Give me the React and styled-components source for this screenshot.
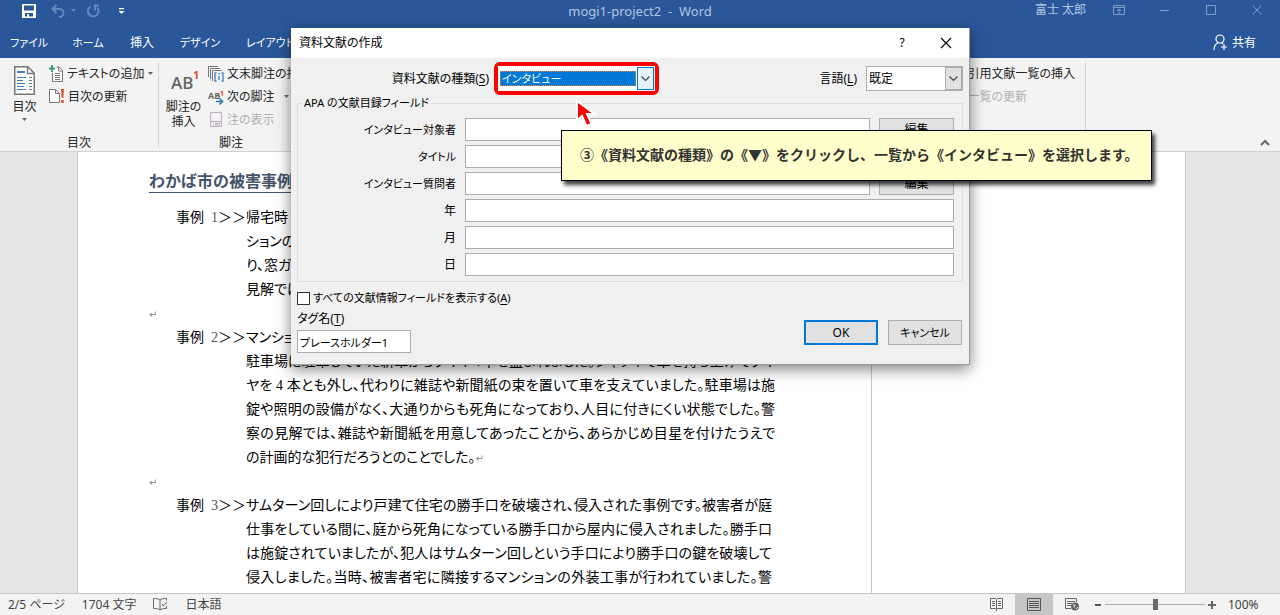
import React from "react";
import styled, { createGlobalStyle } from "styled-components";

const Global = createGlobalStyle`
  *, *::before, *::after { box-sizing: border-box; }
  body {
    margin: 0;
    overflow: hidden;
    background: #e6e6e6;
    color: #262626;
    font: 12px/16px "Noto Sans", "Noto Sans CJK JP", sans-serif;
    font-feature-settings: "palt";
  }
  button, input, select { font: inherit; font-feature-settings: inherit; color: inherit; margin: 0; }
  button { border: 0; padding: 0; background: none; cursor: pointer; }
  svg { display: block; flex: none; }
  u { text-underline-offset: 2px; }
`;

const Window = styled.div`
  height: 100vh;
  display: flex;
  flex-direction: column;
  position: relative;
`;

/* ---------- title bar and tabs ---------- */
const Header = styled.header`
  background: #2a579a;
  color: #fff;
  flex: none;
`;
const TitleBar = styled.div`
  height: 22px;
  display: grid;
  grid-template-columns: 1fr auto 1fr;
  align-items: center;
`;
const QuickAccess = styled.div`
  display: flex;
  align-items: center;
  padding-left: 22px;
`;
const QuickButton = styled.button`
  width: ${(p) => p.$w}px;
  height: 20px;
  color: ${(p) => (p.$dim ? "#6487c0" : "#fff")};
`;
const Title = styled.h1`
  margin: 0;
  font-size: 13px;
  font-weight: 400;
  color: #b4c6e2;
  white-space: pre;
`;
const WindowTools = styled.div`
  display: flex;
  align-items: center;
  justify-content: flex-end;
`;
const UserName = styled.span`
  color: #b4c6e2;
  margin: 0 10px 3px 0;
`;
const WindowButton = styled.button`
  width: 46px;
  height: 20px;
  display: flex;
  justify-content: center;
  color: #7f9bca;
`;
const TabBar = styled.nav`
  height: 36px;
  display: flex;
  align-items: center;
  padding-top: 5px;
`;
const Tab = styled.button`
  width: ${(p) => p.$w}px;
  height: 31px;
  font-size: ${(p) => (p.$kana ? 11 : 12)}px;
  text-align: center;
  white-space: nowrap;
`;
const Share = styled.button`
  margin-left: auto;
  padding-right: 24px;
  display: flex;
  align-items: center;
  gap: 4px;
`;

/* ---------- ribbon ---------- */
const Ribbon = styled.section`
  height: 94px;
  flex: none;
  display: flex;
  padding: 4px 0;
  background: #f3f3f3;
  border-bottom: 1px solid #d2d2d2;
`;
const Group = styled.div`
  width: ${(p) => p.$w}px;
  flex: none;
  border-right: ${(p) => (p.$line ? "1px solid #d2d2d2" : "0")};
  display: flex;
  flex-direction: column;
`;
const GroupBody = styled.div`
  height: 70px;
  flex: none;
  display: flex;
  justify-content: ${(p) => (p.$end ? "flex-end" : "flex-start")};
  padding-right: ${(p) => (p.$end ? 10 : 0)}px;
`;
const GroupName = styled.div`
  text-align: center;
  padding-top: 2px;
  line-height: 18px;
`;
const BigButton = styled.button`
  width: 49px;
  flex: none;
  display: flex;
  flex-direction: column;
  align-items: center;
  padding-top: 4px;
  line-height: 15px;
  gap: 4px;
`;
const Stack = styled.div`
  display: flex;
  flex-direction: column;
`;
const SmallButton = styled.button`
  height: 23px;
  display: flex;
  align-items: center;
  gap: 3px;
  white-space: nowrap;
  color: ${(p) => (p.$dim ? "#b0b0b0" : "inherit")};
`;
const CaretSlot = styled.span`
  width: 12px;
  display: flex;
  justify-content: flex-end;
`;
const CollapseButton = styled.button`
  margin: auto 10px 0 auto;
  color: #666;
`;

/* ---------- document ---------- */
const Workspace = styled.main`
  flex: 1;
  min-height: 0;
  overflow: hidden;
  display: flex;
  padding: 0 94px 0 77px;
`;
const Page = styled.article`
  width: 795px;
  flex: none;
  background: #fff;
  border: 1px solid #c6c6c6;
  border-width: 0 1px;
  padding: 20px 99px 0 71px;
  color: #000;
  font: 14px/24px "Liberation Serif", "Noto Sans CJK JP", serif;
  font-feature-settings: "palt";
`;
const MarkupArea = styled.aside`
  flex: 1;
  background: #fff;
  border-right: 1px solid #c6c6c6;
`;
const Heading = styled.h2`
  margin: 0 0 13px;
  font-size: 16px;
  line-height: 20px;
  font-weight: 700;
  font-feature-settings: normal;
  color: #44546a;
  border-bottom: 1px solid #44546a;
`;
const Case = styled.section`
  display: grid;
  grid-template-columns: 70px 1fr;
  padding-left: 27px;
`;
const CaseLabel = styled.div`
  white-space: pre;
  font-feature-settings: normal;
  span { color: #555; }
`;
const Line = styled.div`
  height: 24px;
  white-space: nowrap;
  text-align: justify;
  text-align-last: ${(p) => (p.$ragged ? "left" : "justify")};
`;
const Blank = styled.div`
  height: 24px;
`;
const Mark = styled.span`
  color: #888;
  font: 10px/24px "DejaVu Sans", sans-serif;
`;

/* ---------- status bar ---------- */
const StatusBar = styled.footer`
  height: 22px;
  flex: none;
  display: flex;
  align-items: center;
  padding: 0 18px 0 8px;
  background: #f3f3f3;
  border-top: 1px solid #c6c6c6;
  color: #444;
`;
const StatusItem = styled.span`
  margin-right: 17px;
`;
const ViewButtons = styled.div`
  margin-left: auto;
  display: flex;
  height: 100%;
`;
const ViewButton = styled.button`
  width: 38px;
  display: flex;
  align-items: center;
  justify-content: center;
  background: ${(p) => (p.$on ? "#c6c6c6" : "transparent")};
`;
const ZoomButton = styled.button`
  width: 14px;
  height: 20px;
  display: flex;
  align-items: center;
  justify-content: center;
`;
const ZoomSlider = styled.input`
  appearance: none;
  width: 100px;
  height: 14px;
  background: linear-gradient(#ababab, #ababab) center / 100% 1px no-repeat;
  &::-webkit-slider-thumb {
    appearance: none;
    width: 5px;
    height: 11px;
    background: #6a6a6a;
  }
`;
const ZoomValue = styled.span`
  width: 34px;
  margin-left: 9px;
`;

/* ---------- dialog ---------- */
const Dialog = styled.form`
  position: absolute;
  left: 291px;
  top: 28px;
  width: 679px;
  background: #f0f0f0;
  border: 1px solid #9a9a9a;
  border-width: 0 1px 1px 0;
  box-shadow: 0 4px 14px rgba(0, 0, 0, 0.5);
  color: #000;
  padding-bottom: 11px;
`;
const DialogTitle = styled.div`
  height: 30px;
  background: #fff;
  display: flex;
  align-items: center;
  padding: 0 16px 0 8px;
`;
const DialogName = styled.h2`
  margin: 0 auto 0 0;
  font-size: 12px;
  font-weight: 400;
`;
const DialogIcon = styled.button`
  width: 14px;
  height: 20px;
  margin-left: 30px;
  display: flex;
  align-items: center;
  justify-content: center;
`;
const TypeRow = styled.div`
  height: 40px;
  display: flex;
  align-items: center;
  padding: 1px 6px 0 0;
`;
const TypeLabel = styled.label`
  width: ${(p) => p.$w || "auto"};
  margin-left: ${(p) => (p.$push ? "auto" : "0")};
  margin-right: ${(p) => (p.$push ? "9px" : "5px")};
  text-align: right;
`;
const Ring = styled.div`
  border: 4px solid #f00;
  border-radius: 6px;
  display: flex;
`;
const Combo = styled.div`
  width: ${(p) => p.$w}px;
  height: 25px;
  display: flex;
  background: #fff;
  border: 1px solid ${(p) => (p.$hot ? "#fff" : "#adadad")};
`;
const ComboSelect = styled.select`
  appearance: none;
  flex: 1;
  border: 0;
  outline: ${(p) => (p.$hot ? "1px dotted #e08a32" : "0")};
  outline-offset: -1px;
  border-radius: 0;
  padding: 0 2px;
  margin: ${(p) => (p.$hot ? "4px 1px" : "0")};
  background: ${(p) => (p.$hot ? "#0078d7" : "#fff")};
  color: ${(p) => (p.$hot ? "#fff" : "#000")};
  font-size: ${(p) => (p.$hot ? 11 : 12)}px;
  line-height: 14px;
`;
const ComboArrow = styled.span`
  width: 17px;
  display: flex;
  align-items: center;
  justify-content: center;
  pointer-events: none;
  border: 1px solid ${(p) => (p.$hot ? "#0078d7" : "#adadad")};
  background: ${(p) => (p.$hot ? "#e5f1fb" : "#e1e1e1")};
`;
const Fields = styled.fieldset`
  margin: 0 6px;
  padding: 10px 8px 5px 0;
  border: 1px solid #dcdcdc;
  display: flex;
  flex-direction: column;
  gap: 4px;
`;
const Legend = styled.legend`
  margin-left: 4px;
  padding: 0 2px;
  font-size: 11px;
  line-height: 10px;
`;
const Field = styled.div`
  display: flex;
  align-items: center;
  height: 23px;
`;
const FieldLabel = styled.label`
  width: 158px;
  margin-right: 9px;
  text-align: right;
  font-size: ${(p) => (p.$kana ? 11 : 12)}px;
`;
const TextBox = styled.input`
  flex: ${(p) => (p.$w ? "none" : "1")};
  width: ${(p) => (p.$w ? p.$w + "px" : "auto")};
  min-width: 0;
  height: 23px;
  border: 1px solid #abadb3;
  background: #fff;
  padding: 0 2px;
  font-size: 11px;
`;
const PushButton = styled.button`
  width: ${(p) => (p.$small ? 75 : 74)}px;
  height: ${(p) => (p.$small ? 23 : 25)}px;
  margin-left: ${(p) => (p.$small ? 9 : 10)}px;
  font-size: ${(p) => (p.$kana ? 11 : 12)}px;
  background: #e1e1e1;
  border: ${(p) => (p.$default ? "2px solid #0078d7" : "1px solid #adadad")};
`;
const CheckRow = styled.label`
  display: flex;
  align-items: center;
  gap: 3px;
  margin: 8px 0 0 6px;
  font-size: 11px;
`;
const CheckBox = styled.input`
  appearance: none;
  width: 13px;
  height: 13px;
  border: 1px solid #333;
  background: #fff;
`;
const DialogFoot = styled.div`
  display: flex;
  align-items: flex-start;
  padding: 5px 7px 0 6px;
`;
const TagField = styled.div`
  display: flex;
  flex-direction: column;
  gap: 3px;
  margin-right: auto;
`;
const Actions = styled.div`
  display: flex;
  margin: 9px 0 1px;
`;

/* ---------- guide bubble and pointer ---------- */
const Bubble = styled.p`
  position: absolute;
  left: 561px;
  top: 130px;
  width: 591px;
  margin: 0;
  padding: 13px 18px 15px;
  border: 1px solid #000;
  background: #ffffcb;
  box-shadow: 3px 4px 4px rgba(0, 0, 0, 0.75);
  color: #333;
  font: 700 14px/21px "Noto Sans CJK JP", sans-serif;
  white-space: nowrap;
`;
const Pointer = styled.svg`
  position: absolute;
  left: 574px;
  top: 98px;
`;

const Caret = ({ c = "#666" }) => (
  <svg width="7" height="4" viewBox="0 0 7 4"><path d="M1 0h5L3.500 3z" fill={c} /></svg>
);
const Chevron = ({ c = "#444" }) => (
  <svg width="9" height="6" viewBox="0 0 9 6"><path d="M.5.5l4 4 4-4" fill="none" stroke={c} strokeWidth="1.200" /></svg>
);
const SaveIcon = () => (
  <svg width="14" height="14" viewBox="0 0 14 14">
    <path fillRule="evenodd" fill="#fff" d="M0 0h14v14H0zM2 1.500v5h10v-5zM3 9v3.500h2V10h2v2.500h4V9z" />
  </svg>
);
const UndoIcon = () => (
  <svg width="15" height="14" viewBox="0 0 15 14" fill="none" stroke="currentColor" strokeWidth="2">
    <path d="M5.500 1L1.500 5l4 4M2 5h6.500a4 4 0 0 1 0 8H8" />
  </svg>
);
const RedoIcon = () => (
  <svg width="14" height="14" viewBox="0 0 14 14" fill="none" stroke="currentColor" strokeWidth="2">
    <path d="M4.500 2.500A5.300 5.300 0 1 0 11.500 4M8 1.500h5M9 1v5.500" />
  </svg>
);
const TocIcon = () => (
  <svg width="21" height="29" viewBox="0 0 21 29">
    <path d="M.75.75h13l6.500 6.500v21H.75z" fill="#fff" stroke="#777" strokeWidth="1.500" />
    <path d="M13.500 1v6.500H20" fill="none" stroke="#777" strokeWidth="1.300" />
    <path d="M3 5h8v2H3z" fill="#3f7fc1" />
    <path d="M3 11.500h9M3 14.500h6M3 17.500h8M3 20.500h7M3 23.500h9" stroke="#3f7fc1" />
    <path d="M15 11.500h3M15 14.500h3M15 17.500h3M15 20.500h3M15 23.500h3" stroke="#777" />
  </svg>
);
const AddTextIcon = () => (
  <svg width="15" height="17" viewBox="0 0 15 17">
    <path d="M3.500 8v8.500h10V5.500L10 2H7.500" fill="#fff" stroke="#777" />
    <path d="M9.500 2v4H13.500" fill="none" stroke="#777" />
    <path d="M6 8.500h5M6 10.500h5M6 12.500h5M6 14.500h5" stroke="#777" />
    <path d="M3 0v7M0 3.500h6" stroke="#4a9a7c" strokeWidth="2" />
  </svg>
);
const UpdateIcon = () => (
  <svg width="16" height="15" viewBox="0 0 16 15">
    <path d="M.5.5h6l4 4v9H.5zM6.500.5v4h4" fill="#fff" stroke="#777" />
    <path d="M12 0h3l-.7 9h-1.600zM12.200 11h2.500v3h-2.500z" fill="#d9502e" />
  </svg>
);
const FootnoteIcon = () => (
  <svg width="30" height="29" viewBox="0 0 30 29">
    <text x="2" y="23" fontSize="17" fontWeight="600" fontFamily="Open Sans" fill="#666">AB</text>
    <text x="24" y="13" fontSize="11" fontWeight="700" fontFamily="Open Sans" fill="#d9502e">1</text>
  </svg>
);
const EndnoteIcon = () => (
  <svg width="16" height="16" viewBox="0 0 16 16" fill="none">
    <path d="M.5 11V.5H10M2.500 13V2.500H12M4.500 15V4.500h9" stroke="#777" />
    <path d="M8.500 7H7v8h1.500M13.500 7H15v8h-1.500M11 7v1.500M11 10v4" stroke="#3f7fc1" strokeWidth="1.300" />
  </svg>
);
const NextNoteIcon = () => (
  <svg width="16" height="18" viewBox="0 0 16 18">
    <text x="0" y="11" fontSize="9" fontWeight="700" fontFamily="Open Sans" fill="#666">AB</text>
    <text x="12" y="8" fontSize="7" fontWeight="700" fontFamily="Open Sans" fill="#d9502e">1</text>
    <path d="M8 13.500h6M11.500 10.500l3 3-3 3" fill="none" stroke="#2e75b6" strokeWidth="1.600" />
  </svg>
);
const ShowNoteIcon = () => (
  <svg width="16" height="16" viewBox="0 0 16 16">
    <path d="M2.500.5h11v14h-11z" fill="#f6eef6" stroke="#b5b0b5" />
    <path d="M2 9.500h12M5 11.500h1M7 11.500h5M5 13h1M7 13h5" stroke="#b5b0b5" />
  </svg>
);
const ShareIcon = () => (
  <svg width="15" height="17" viewBox="0 0 15 17" fill="none" stroke="#fff" strokeWidth="1.200">
    <circle cx="7" cy="5" r="4" />
    <path d="M1 16c0-4 2-6.500 4.500-7.500M8.500 8.500L10 10M8 13h6M11 10v6" />
  </svg>
);
const CloseX = () => (
  <svg width="12" height="12" viewBox="0 0 12 12"><path d="M1 1l10 10M11 1L1 11" stroke="currentColor" fill="none" strokeWidth="1.100" /></svg>
);

const case1 = ["帰宅時", "ションの", "り、窓ガ", "見解では"];
const case2 = [
  "マンショ",
  "駐車場に駐車していた新車からタイヤ４本を盗まれました。ジャッキで車を持ち上げてタイ",
  "ヤを 4 本とも外し、代わりに雑誌や新聞紙の束を置いて車を支えていました。駐車場は施",
  "錠や照明の設備がなく、大通りからも死角になっており、人目に付きにくい状態でした。警",
  "察の見解では、雑誌や新聞紙を用意してあったことから、あらかじめ目星を付けたうえで",
  "の計画的な犯行だろうとのことでした。",
];
const case3 = [
  "サムターン回しにより戸建て住宅の勝手口を破壊され、侵入された事例です。被害者が庭",
  "仕事をしている間に、庭から死角になっている勝手口から屋内に侵入されました。勝手口",
  "は施錠されていましたが、犯人はサムターン回しという手口により勝手口の鍵を破壊して",
  "侵入しました。当時、被害者宅に隣接するマンションの外装工事が行われていました。警",
];

const CaseBlock = ({ n, lines, ends }) => (
  <Case>
    <CaseLabel>事例{"  "}<span>{n}</span>＞＞</CaseLabel>
    <div>
      {lines.map((t, i) => (
        <Line key={t} $ragged={t.length < 30}>
          {t}
          {ends && i === lines.length - 1 && <Mark>↵</Mark>}
        </Line>
      ))}
    </div>
  </Case>
);

const fields = [
  { id: "who", name: "インタビュー対象者", kana: true, short: true, edit: true },
  { id: "title", name: "タイトル", kana: true, short: true },
  { id: "asker", name: "インタビュー質問者", kana: true, short: true, edit: true },
  { id: "year", name: "年" },
  { id: "month", name: "月" },
  { id: "day", name: "日" },
];

export default function App() {
  return (
    <Window>
      <Global />
      <Header>
        <TitleBar>
          <QuickAccess>
            <QuickButton $w={29} aria-label="上書き保存"><SaveIcon /></QuickButton>
            <QuickButton $w={19} $dim aria-label="元に戻す"><UndoIcon /></QuickButton>
            <QuickButton $w={16} $dim aria-label="元に戻す履歴"><Caret c="#6487c0" /></QuickButton>
            <QuickButton $w={32} $dim aria-label="やり直し"><RedoIcon /></QuickButton>
            <QuickButton $w={10} aria-label="クイック アクセス ツール バーのユーザー設定">
              <svg width="7" height="7" viewBox="0 0 7 7" fill="#fff"><path d="M1 0h5v1.300H1zM.5 3h6l-3 3z" /></svg>
            </QuickButton>
          </QuickAccess>
          <Title>{"mogi1-project2  -  Word"}</Title>
          <WindowTools>
            <UserName>富士 太郎</UserName>
            <WindowButton aria-label="リボンの表示オプション">
              <svg width="14" height="18" viewBox="0 0 14 18" fill="none" stroke="currentColor"><path d="M1.500 4.500h11v9h-11zM1.500 6.500h11M7 13V8M5 10l2-2 2 2" /></svg>
            </WindowButton>
            <WindowButton aria-label="最小化">
              <svg width="10" height="18" viewBox="0 0 10 18"><path d="M0 9.500h9" stroke="currentColor" /></svg>
            </WindowButton>
            <WindowButton aria-label="最大化">
              <svg width="10" height="18" viewBox="0 0 10 18"><path d="M.5 4.500h9v9h-9z" fill="none" stroke="currentColor" /></svg>
            </WindowButton>
            <WindowButton aria-label="閉じる">
              <svg width="10" height="18" viewBox="0 0 10 18"><path d="M.5 4.500l9 9M9.500 4.500l-9 9" stroke="currentColor" /></svg>
            </WindowButton>
          </WindowTools>
        </TitleBar>
        <TabBar>
          <Tab $w={58} $kana>ファイル</Tab>
          <Tab $w={60} $kana>ホーム</Tab>
          <Tab $w={48}>挿入</Tab>
          <Tab $w={68} $kana>デザイン</Tab>
          <Tab $w={72} $kana>レイアウト</Tab>
          <Share><ShareIcon />共有</Share>
        </TabBar>
      </Header>

      <Ribbon>
        <Group $w={159} $line>
          <GroupBody>
            <BigButton><TocIcon />目次<Caret /></BigButton>
            <Stack>
              <SmallButton><AddTextIcon />テキストの追加<Caret /></SmallButton>
              <SmallButton><UpdateIcon />目次の更新</SmallButton>
            </Stack>
          </GroupBody>
          <GroupName>目次</GroupName>
        </Group>
        <Group $w={144}>
          <GroupBody>
            <BigButton><FootnoteIcon /><span>脚注の<br />挿入</span></BigButton>
            <Stack>
              <SmallButton><EndnoteIcon />文末脚注の挿</SmallButton>
              <SmallButton><NextNoteIcon />次の脚注<CaretSlot><Caret /></CaretSlot></SmallButton>
              <SmallButton $dim><ShowNoteIcon />注の表示</SmallButton>
            </Stack>
          </GroupBody>
          <GroupName>脚注</GroupName>
        </Group>
        <Group $w={783} $line>
          <GroupBody $end>
            <Stack>
              <SmallButton>引用文献一覧の挿入</SmallButton>
              <SmallButton $dim>一覧の更新</SmallButton>
            </Stack>
          </GroupBody>
        </Group>
        <CollapseButton aria-label="リボンを折りたたむ">
          <svg width="10" height="8" viewBox="0 0 10 8"><path d="M1 6l4-4 4 4" fill="none" stroke="currentColor" strokeWidth="2" /></svg>
        </CollapseButton>
      </Ribbon>

      <Workspace>
        <Page>
          <Heading>わかば市の被害事例</Heading>
          <CaseBlock n="1" lines={case1} />
          <Blank><Mark>↵</Mark></Blank>
          <CaseBlock n="2" lines={case2} ends />
          <Blank><Mark>↵</Mark></Blank>
          <CaseBlock n="3" lines={case3} />
        </Page>
        <MarkupArea />
      </Workspace>

      <StatusBar>
        <StatusItem>2/5 ページ</StatusItem>
        <StatusItem>1704 文字</StatusItem>
        <StatusItem>
          <svg width="15" height="13" viewBox="0 0 15 13" fill="none" stroke="#666">
            <path d="M7 2C5.500.7 3 .5.500.5v10C3 10.500 5.500 10.700 7 12zM7 2C8 1 9.500.5 13.500.5v2M7 12c1-1 3-1.500 6.500-1.500V8M9 6l1.500 2L14 4" />
          </svg>
        </StatusItem>
        <StatusItem>日本語</StatusItem>
        <ViewButtons>
          <ViewButton aria-label="閲覧モード">
            <svg width="13" height="13" viewBox="0 0 13 13" fill="none" stroke="#666"><path d="M.5.5h5l1 1 1-1h5v10h-5l-1 1-1-1h-5zM6.500 1v12M2 3.500h3M2 5.500h3M2 7.500h3M8 3.500h3M8 5.500h3M8 7.500h3" /></svg>
          </ViewButton>
          <ViewButton $on aria-label="印刷レイアウト">
            <svg width="14" height="13" viewBox="0 0 14 13" fill="none" stroke="#555"><path d="M.5.5h13v12H.5zM2 3.500h10M2 5.500h10M2 7.500h10M2 9.500h10" /></svg>
          </ViewButton>
          <ViewButton aria-label="Web レイアウト">
            <svg width="14" height="13" viewBox="0 0 14 13" fill="none" stroke="#666"><path d="M6 10.500H.5V.5h11V4M2 3.500h8M2 5.500h5M2 7.500h4" /><circle cx="10" cy="8.500" r="4" fill="#666" stroke="none" /><path d="M8 6.500l2 1-1 2M11 11l2-2" stroke="#f3f3f3" /></svg>
          </ViewButton>
        </ViewButtons>
        <ZoomButton aria-label="縮小"><svg width="8" height="8" viewBox="0 0 8 8"><path d="M1 4h6" stroke="#555" strokeWidth="2" /></svg></ZoomButton>
        <ZoomSlider type="range" min="0" max="100" defaultValue="50" aria-label="ズーム" />
        <ZoomButton aria-label="拡大"><svg width="8" height="8" viewBox="0 0 8 8"><path d="M0 4h8M4 0v8" stroke="#666" strokeWidth="2" /></svg></ZoomButton>
        <ZoomValue>100%</ZoomValue>
      </StatusBar>

      <Dialog onSubmit={(e) => e.preventDefault()}>
        <DialogTitle>
          <DialogName>資料文献の作成</DialogName>
          <DialogIcon type="button">?</DialogIcon>
          <DialogIcon type="button" aria-label="閉じる"><CloseX /></DialogIcon>
        </DialogTitle>
        <TypeRow>
          <TypeLabel htmlFor="kind" $w="198px">資料文献の種類(<u>S</u>)</TypeLabel>
          <Ring>
            <Combo $w={157} $hot>
              <ComboSelect id="kind" $hot defaultValue="interview"><option value="interview">インタビュー</option></ComboSelect>
              <ComboArrow $hot><Chevron /></ComboArrow>
            </Combo>
          </Ring>
          <TypeLabel htmlFor="lang" $push>言語(<u>L</u>)</TypeLabel>
          <Combo $w={97}>
            <ComboSelect id="lang" defaultValue="default"><option value="default">既定</option></ComboSelect>
            <ComboArrow><Chevron /></ComboArrow>
          </Combo>
        </TypeRow>
        <Fields>
          <Legend>APA の文献目録フィールド</Legend>
          {fields.map((f) => (
            <Field key={f.id}>
              <FieldLabel htmlFor={f.id} $kana={f.kana}>{f.name}</FieldLabel>
              <TextBox id={f.id} $w={f.short ? 405 : 0} />
              {f.edit && <PushButton type="button" $small>編集</PushButton>}
            </Field>
          ))}
        </Fields>
        <CheckRow><CheckBox type="checkbox" /><span>すべての文献情報フィールドを表示する(<u>A</u>)</span></CheckRow>
        <DialogFoot>
          <TagField>
            <label htmlFor="tag">タグ名(<u>T</u>)</label>
            <TextBox id="tag" $w={114} defaultValue="プレースホルダー1" />
          </TagField>
          <Actions>
            <PushButton type="submit" $default>OK</PushButton>
            <PushButton type="button" $kana>キャンセル</PushButton>
          </Actions>
        </DialogFoot>
      </Dialog>

      <Bubble>③《資料文献の種類》の《▼》をクリックし、一覧から《インタビュー》を選択します。</Bubble>
      <Pointer width="24" height="31" viewBox="0 0 24 31">
        <path d="M3 3v19.500l5-4.500 4.500 10 5-2.200-4.500-9.800h7.500z" fill="#f00" stroke="#fff" strokeWidth="2" />
      </Pointer>
    </Window>
  );
}
